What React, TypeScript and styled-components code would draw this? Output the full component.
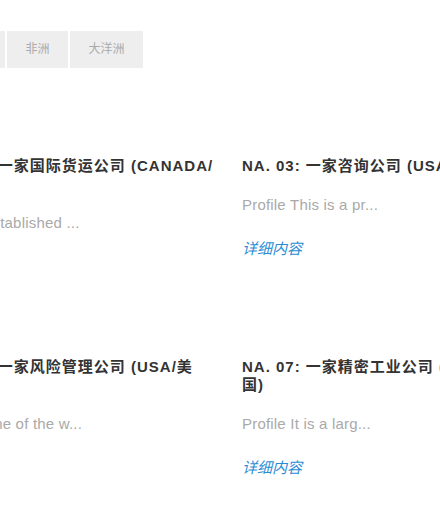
import React from "react";
import styled, { createGlobalStyle } from "styled-components";

const Global = createGlobalStyle`
  html, body {
    margin: 0;
    padding: 0;
    background: #ffffff;
    overflow: hidden;
  }
  body {
    font-family: "Liberation Sans", "Noto Sans CJK SC", sans-serif;
  }
`;

const Viewport = styled.div`
  width: 440px;
  height: 506px;
  overflow: hidden;
`;

const Content = styled.div`
  width: 900px;
  margin-left: -66px;
  padding-top: 31px;
`;

const TabBar = styled.div`
  display: flex;
  gap: 2px;
  margin-left: -203px;
`;

const Tab = styled.div`
  height: 37px;
  padding: 0 18.5px;
  background: #eeeeee;
  color: #aaaaaa;
  font-size: 12px;
  line-height: 37px;
  white-space: nowrap;
`;

const Grid = styled.div`
  display: grid;
  grid-template-columns: repeat(3, 280px);
  column-gap: 28px;
  row-gap: 82px;
  margin-top: 89px;
`;

const Card = styled.div`
  display: flex;
  flex-direction: column;
  align-items: flex-start;
`;

const Title = styled.div`
  font-size: 15px;
  line-height: 18px;
  font-weight: bold;
  letter-spacing: 1px;
  color: #333333;
`;

const Desc = styled.div`
  margin-top: 21px;
  font-size: 15px;
  line-height: 18px;
  letter-spacing: 0.2px;
  color: #a9a9a9;
`;

const More = styled.a`
  margin-top: 26px;
  font-size: 15px;
  line-height: 18px;
  font-style: italic;
  color: #2a8dd4;
  text-decoration: none;
`;

const tabs = ["亚洲", "欧洲", "北美洲", "南美洲", "非洲", "大洋洲"];

const items = [
  { title: "NA. 02: 一家国际货运公司 (CANADA/加拿大)", desc: "Profile Established ..." },
  { title: "NA. 03: 一家咨询公司 (USA/美国)", desc: "Profile This is a pr..." },
  { title: "NA. 04: 一家物流服务公司 (USA/美国)", desc: "Profile The company ..." },
  { title: "NA. 06: 一家风险管理公司 (USA/美国)", desc: "Profile One of the w..." },
  { title: "NA. 07: 一家精密工业公司 (USA/美国)", desc: "Profile It is a larg..." },
  { title: "NA. 08: 一家能源科技公司 (USA/美国)", desc: "Profile The company ..." },
];

export default function App() {
  return (
    <Viewport>
      <Global />
      <Content>
        <TabBar>
          {tabs.map((t) => (
            <Tab key={t}>{t}</Tab>
          ))}
        </TabBar>
        <Grid>
          {items.map((it) => (
            <Card key={it.title}>
              <Title>{it.title}</Title>
              <Desc>{it.desc}</Desc>
              <More href="#">详细内容</More>
            </Card>
          ))}
        </Grid>
      </Content>
    </Viewport>
  );
}
